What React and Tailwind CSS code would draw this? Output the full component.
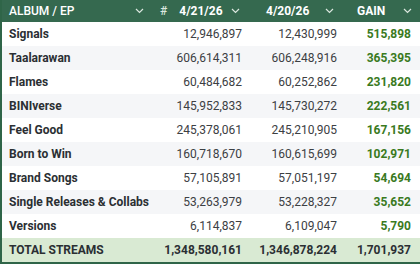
import React from "react";

const rows = [
  ["Signals", "12,946,897", "12,430,999", "515,898"],
  ["Taalarawan", "606,614,311", "606,248,916", "365,395"],
  ["Flames", "60,484,682", "60,252,862", "231,820"],
  ["BINIverse", "145,952,833", "145,730,272", "222,561"],
  ["Feel Good", "245,378,061", "245,210,905", "167,156"],
  ["Born to Win", "160,718,670", "160,615,699", "102,971"],
  ["Brand Songs", "57,105,891", "57,051,197", "54,694"],
  ["Single Releases & Collabs", "53,263,979", "53,228,327", "35,652"],
  ["Versions", "6,114,837", "6,109,047", "5,790"],
];

const Chevron = () => (
  <svg width="9" height="6" viewBox="0 0 9 6" fill="none" className="shrink-0">
    <path d="M1 1l3.5 3.5L8 1" stroke="#dbe7df" strokeWidth="1.2" />
  </svg>
);

const App = () => {
  return (
    <div
      className="w-[420px] h-[264px] bg-white overflow-hidden border-l-2 border-[#2f6548]"
      style={{ fontFamily: "Roboto, 'Liberation Sans', sans-serif" }}
    >
      <div className="flex h-[22px] items-center bg-[#35694f] text-white text-[12px]">
        <div className="w-[153px] flex items-center justify-between pl-[7px] pr-[11px] font-medium">
          <span>ALBUM / EP</span>
          <Chevron />
        </div>
        <div className="w-[93px] flex items-center pl-[5px] pr-[8px]">
          <span className="text-[#dbe7df] font-medium">#</span>
          <span className="ml-[12px] font-bold">4/21/26</span>
          <span className="ml-auto">
            <Chevron />
          </span>
        </div>
        <div className="w-[95px] flex items-center pr-[9px]">
          <span className="ml-[18px] font-bold">4/20/26</span>
          <span className="ml-auto">
            <Chevron />
          </span>
        </div>
        <div className="w-[75px] flex items-center pr-[6px]">
          <span className="ml-[14px] font-bold">GAIN</span>
          <span className="ml-auto">
            <Chevron />
          </span>
        </div>
      </div>

      {rows.map((r, i) => (
        <div
          key={r[0]}
          className={`flex h-[24px] items-center text-[12px] ${
            i % 2 === 1 ? "bg-[#f5f6f8]" : "bg-white"
          }`}
        >
          <div className="w-[153px] pl-[7px] font-bold text-[#2b2f33] truncate">{r[0]}</div>
          <div className="w-[87px] text-right text-[#3c4043]">{r[1]}</div>
          <div className="w-[95px] text-right text-[#3c4043]">{r[2]}</div>
          <div className="w-[74px] text-right font-bold text-[#3a7a1e]">{r[3]}</div>
        </div>
      ))}

      <div className="flex h-[26px] items-center text-[12px] font-bold text-[#2b2f33] bg-[#d9ead3] border-b-2 border-[#2f6548]">
        <div className="w-[153px] pl-[7px]">TOTAL STREAMS</div>
        <div className="w-[87px] text-right">1,348,580,161</div>
        <div className="w-[95px] text-right">1,346,878,224</div>
        <div className="w-[74px] text-right">1,701,937</div>
      </div>
    </div>
  );
};

export default App;
